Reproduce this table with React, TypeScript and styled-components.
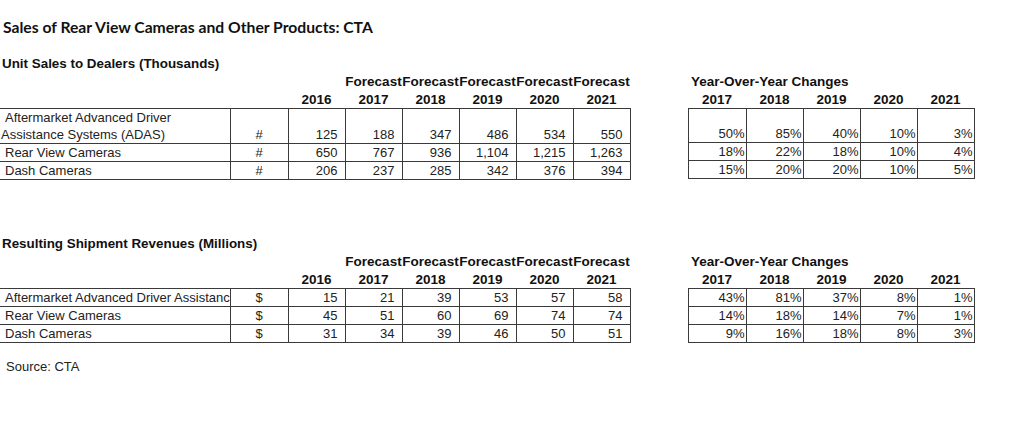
import React from "react";
import styled, { createGlobalStyle } from "styled-components";

const GlobalStyle = createGlobalStyle`
  html, body { margin: 0; padding: 0; background: #ffffff; }
  body { font-family: "Liberation Sans", Arial, sans-serif; color: #1e1e1e; }
`;

const Page = styled.div`
  width: 1024px;
  height: 421px;
  padding-top: 17px;
  box-sizing: border-box;
  overflow: hidden;
`;

const Title = styled.div`
  font-family: Lato, "Open Sans", sans-serif;
  font-weight: 700;
  font-size: 15.7px;
  line-height: 20px;
  height: 20px;
  padding-left: 3px;
  color: #111;
`;

const Section = styled.section<{ $top: number }>`
  margin-top: ${(p) => p.$top}px;
`;

const SectionHeading = styled.div`
  font-weight: 700;
  font-size: 13.4px;
  line-height: 16px;
  height: 16px;
  padding-left: 2px;
  color: #111;
`;

const TablesRow = styled.div`
  display: flex;
  align-items: flex-start;
  gap: 57px;
`;

const Table = styled.table<{ $width: number }>`
  border-collapse: collapse;
  table-layout: fixed;
  width: ${(p) => p.$width}px;
  font-size: 13px;
`;

const HeadCell = styled.th<{ $align?: string }>`
  font-weight: 700;
  font-size: 13.5px;
  line-height: 15px;
  height: 17px;
  padding: 0 0 1px ${(p) => (p.$align === "left" ? "3px" : "0")};
  text-align: ${(p) => p.$align || "center"};
  vertical-align: bottom;
  white-space: nowrap;
  overflow: visible;
  color: #111;
`;

const BodyRow = styled.tr<{ $h: number }>`
  height: ${(p) => p.$h}px;
`;

const Cell = styled.td`
  border: 1px solid #3a3a3a;
  padding: 0;
  line-height: 17px;
  vertical-align: bottom;
  color: #222;
`;

const LabelCell = styled(Cell)<{ $clip?: boolean }>`
  border-left: none;
  padding-left: 1px;
  text-indent: 4px;
  text-align: left;
  white-space: ${(p) => (p.$clip ? "nowrap" : "normal")};
  overflow: hidden;
`;

const UnitCell = styled(Cell)`
  text-align: center;
`;

const NumCell = styled(Cell)<{ $pad: number }>`
  text-align: right;
  padding-right: ${(p) => p.$pad}px;
`;

type Row = { label: string; unit: string; values: string[]; yoy: string[]; h: number };

const years = ["2016", "2017", "2018", "2019", "2020", "2021"];
const yoyYears = ["2017", "2018", "2019", "2020", "2021"];

const unitRows: Row[] = [
  {
    label: "Aftermarket Advanced Driver Assistance Systems (ADAS)",
    unit: "#",
    values: ["125", "188", "347", "486", "534", "550"],
    yoy: ["50%", "85%", "40%", "10%", "3%"],
    h: 34,
  },
  {
    label: "Rear View Cameras",
    unit: "#",
    values: ["650", "767", "936", "1,104", "1,215", "1,263"],
    yoy: ["18%", "22%", "18%", "10%", "4%"],
    h: 17,
  },
  {
    label: "Dash Cameras",
    unit: "#",
    values: ["206", "237", "285", "342", "376", "394"],
    yoy: ["15%", "20%", "20%", "10%", "5%"],
    h: 17,
  },
];

const revenueRows: Row[] = [
  {
    label: "Aftermarket Advanced Driver Assistance Systems (ADAS)",
    unit: "$",
    values: ["15", "21", "39", "53", "57", "58"],
    yoy: ["43%", "81%", "37%", "8%", "1%"],
    h: 17,
  },
  {
    label: "Rear View Cameras",
    unit: "$",
    values: ["45", "51", "60", "69", "74", "74"],
    yoy: ["14%", "18%", "14%", "7%", "1%"],
    h: 17,
  },
  {
    label: "Dash Cameras",
    unit: "$",
    values: ["31", "34", "39", "46", "50", "51"],
    yoy: ["9%", "16%", "18%", "8%", "3%"],
    h: 17,
  },
];

const SourceNote = styled.div<{ $top: number }>`
  margin-top: ${(p) => p.$top}px;
  font-size: 13px;
  line-height: 16px;
  padding-left: 1px;
  text-indent: 5px;
  color: #222;
`;

function DataBlock({ heading, rows, clip }: { heading: string; rows: Row[]; clip?: boolean }) {
  return (
    <>
      <SectionHeading>{heading}</SectionHeading>
      <TablesRow>
        <Table $width={630}>
          <colgroup>
            <col style={{ width: 230 }} />
            <col style={{ width: 58 }} />
            {years.map((y) => (
              <col key={y} style={{ width: 57 }} />
            ))}
          </colgroup>
          <thead>
            <tr>
              <HeadCell />
              <HeadCell />
              <HeadCell />
              {years.slice(1).map((y) => (
                <HeadCell key={y}>Forecast</HeadCell>
              ))}
            </tr>
            <tr>
              <HeadCell />
              <HeadCell />
              {years.map((y) => (
                <HeadCell key={y}>{y}</HeadCell>
              ))}
            </tr>
          </thead>
          <tbody>
            {rows.map((r) => (
              <BodyRow key={r.label} $h={r.h}>
                <LabelCell $clip={clip}>{r.label}</LabelCell>
                <UnitCell>{r.unit}</UnitCell>
                {r.values.map((v, i) => (
                  <NumCell key={i} $pad={7}>
                    {v}
                  </NumCell>
                ))}
              </BodyRow>
            ))}
          </tbody>
        </Table>
        <Table $width={286}>
          <colgroup>
            <col style={{ width: 58 }} />
            {yoyYears.slice(1).map((y) => (
              <col key={y} style={{ width: 57 }} />
            ))}
          </colgroup>
          <thead>
            <tr>
              <HeadCell colSpan={5} $align="left">
                Year-Over-Year Changes
              </HeadCell>
            </tr>
            <tr>
              {yoyYears.map((y) => (
                <HeadCell key={y}>{y}</HeadCell>
              ))}
            </tr>
          </thead>
          <tbody>
            {rows.map((r) => (
              <BodyRow key={r.label} $h={r.h}>
                {r.yoy.map((v, i) => (
                  <NumCell key={i} $pad={1}>
                    {v}
                  </NumCell>
                ))}
              </BodyRow>
            ))}
          </tbody>
        </Table>
      </TablesRow>
    </>
  );
}

export default function App() {
  return (
    <>
      <GlobalStyle />
      <Page>
        <Title>Sales of Rear View Cameras and Other Products: CTA</Title>
        <Section $top={19}>
          <DataBlock heading="Unit Sales to Dealers (Thousands)" rows={unitRows} />
        </Section>
        <Section $top={56}>
          <DataBlock heading="Resulting Shipment Revenues (Millions)" rows={revenueRows} clip />
        </Section>
        <SourceNote $top={16}>Source: CTA</SourceNote>
      </Page>
    </>
  );
}
